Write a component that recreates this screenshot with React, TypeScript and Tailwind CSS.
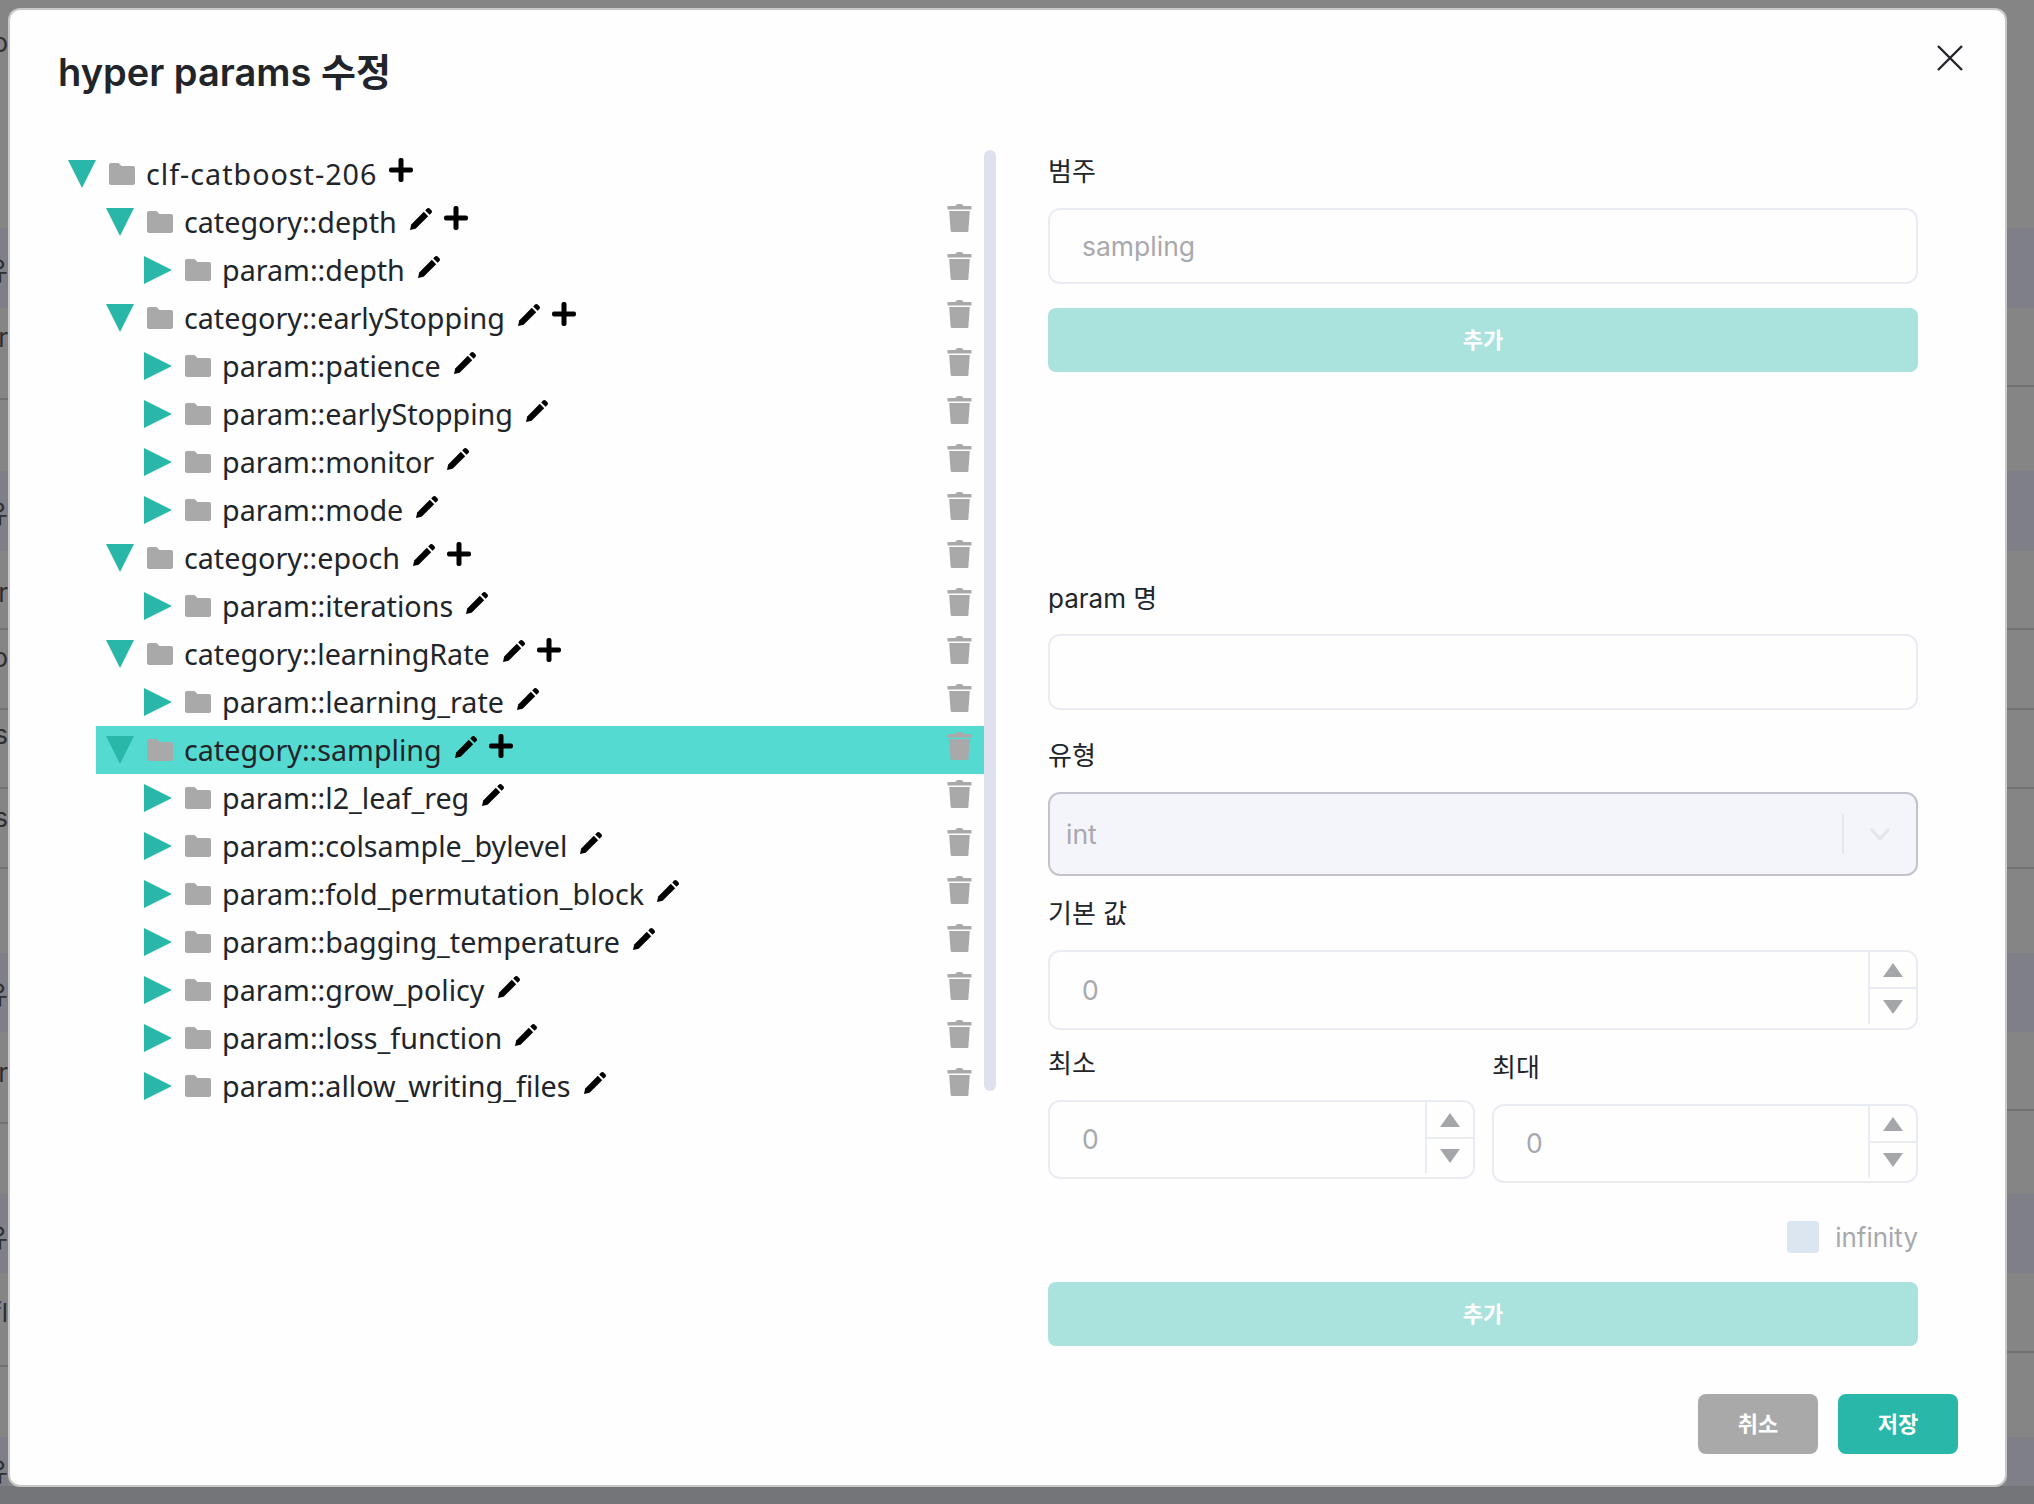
const rows: { depth: number; label: string; kind: "root" | "category" | "param"; selected?: boolean }[] = [
  { depth: 0, label: "clf-catboost-206", kind: "root" },
  { depth: 1, label: "category::depth", kind: "category" },
  { depth: 2, label: "param::depth", kind: "param" },
  { depth: 1, label: "category::earlyStopping", kind: "category" },
  { depth: 2, label: "param::patience", kind: "param" },
  { depth: 2, label: "param::earlyStopping", kind: "param" },
  { depth: 2, label: "param::monitor", kind: "param" },
  { depth: 2, label: "param::mode", kind: "param" },
  { depth: 1, label: "category::epoch", kind: "category" },
  { depth: 2, label: "param::iterations", kind: "param" },
  { depth: 1, label: "category::learningRate", kind: "category" },
  { depth: 2, label: "param::learning_rate", kind: "param" },
  { depth: 1, label: "category::sampling", kind: "category", selected: true },
  { depth: 2, label: "param::l2_leaf_reg", kind: "param" },
  { depth: 2, label: "param::colsample_bylevel", kind: "param" },
  { depth: 2, label: "param::fold_permutation_block", kind: "param" },
  { depth: 2, label: "param::bagging_temperature", kind: "param" },
  { depth: 2, label: "param::grow_policy", kind: "param" },
  { depth: 2, label: "param::loss_function", kind: "param" },
  { depth: 2, label: "param::allow_writing_files", kind: "param" },
]

const indent = ["pl-0", "pl-[38px]", "pl-[76px]"]

// what is left of the page behind the modal, top to bottom
type Strip = { h: number; band?: boolean; line?: boolean; text?: string; pt?: number }

const leftStrip: Strip[] = [
  { h: 228, text: "o", pt: 26 },
  { h: 80, band: true, text: "유", pt: 26 },
  { h: 92, line: true, text: "r", pt: 13 },
  { h: 71 },
  { h: 80, band: true, text: "유", pt: 26 },
  { h: 79, line: true, text: "r", pt: 25 },
  { h: 80, line: true, text: "o", pt: 11 },
  { h: 79, line: true, text: "s", pt: 8 },
  { h: 80, line: true, text: "s", pt: 12 },
  { h: 84 },
  { h: 79, band: true, text: "유", pt: 25 },
  { h: 92, line: true, text: "r", pt: 24 },
  { h: 70 },
  { h: 80, band: true, text: "유", pt: 27 },
  { h: 93, line: true, text: "fl", pt: 22 },
  { h: 70 },
  { h: 67, band: true, text: "유", pt: 18 },
]

const rightStrip: Strip[] = [
  { h: 228 },
  { h: 80, band: true },
  { h: 79, line: true },
  { h: 83 },
  { h: 81, band: true },
  { h: 79, line: true },
  { h: 80, line: true },
  { h: 79, line: true },
  { h: 80, line: true },
  { h: 84 },
  { h: 79, band: true },
  { h: 79, line: true },
  { h: 83 },
  { h: 80, band: true },
  { h: 79, line: true },
  { h: 84 },
  { h: 67, band: true },
]

function BackdropStrip({ items, className }: { items: Strip[]; className: string }) {
  return (
    <div className={`flex flex-col overflow-hidden ${className}`}>
      {items.map((s, i) => (
        <div
          key={i}
          style={{ height: s.h, paddingTop: s.pt ?? 0 }}
          className={`flex shrink-0 items-start justify-end whitespace-nowrap text-[26px] leading-[34px] text-[#2f2f2f] ${
            s.band ? "bg-[#7f8087]" : "bg-[#858585]"
          } ${s.line ? "border-b-2 border-[#717171]" : ""}`}
        >
          {s.text}
        </div>
      ))}
    </div>
  )
}

function Backdrop() {
  return (
    <div className="absolute inset-0 flex justify-between bg-[#858585]">
      <BackdropStrip items={leftStrip} className="w-2" />
      <BackdropStrip items={rightStrip} className="w-[27px]" />
      <div className="absolute bottom-0 left-0 right-0 h-[18px] bg-[#747579]" />
    </div>
  )
}

function Caret({ open }: { open: boolean }) {
  return (
    <svg width="28" height="28" viewBox="0 0 28 28" className="shrink-0 fill-[#29b7a9]">
      {open ? <path d="M0 0H28L14 28Z" /> : <path d="M0 0L28 14L0 28Z" />}
    </svg>
  )
}

function Folder() {
  return (
    <svg width="26" height="22" viewBox="0 0 26 22" className="ml-[13px] shrink-0 fill-[#a9a9a9]">
      <path d="M2 0H9.5L12.5 3H24C25.1 3 26 3.9 26 5V20C26 21.1 25.1 22 24 22H2C.9 22 0 21.1 0 20V2C0 .9.9 0 2 0Z" />
    </svg>
  )
}

function Pencil() {
  return (
    <svg width="22" height="22" viewBox="0 0 22 22" className="ml-[13px] shrink-0 -translate-y-[3px] fill-black">
      <path d="M0 22L1.2 16.4L13.8 3.8L18.2 8.2L5.6 20.8Z" />
      <path d="M15.2 2.4L17 .6C17.8-.2 18.9-.2 19.7.6L21.4 2.3C22.2 3.1 22.2 4.2 21.4 5L19.6 6.8Z" />
    </svg>
  )
}

function Plus() {
  return (
    <svg width="24" height="24" viewBox="0 0 24 24" className="ml-3 shrink-0 -translate-y-[4px] fill-black">
      <rect x="9.5" y="0" width="5" height="24" rx="2" />
      <rect x="0" y="9.5" width="24" height="5" rx="2" />
    </svg>
  )
}

function Trash() {
  return (
    <svg width="25" height="28" viewBox="0 0 25 28" className="shrink-0 -translate-y-1 fill-[#a9a9a9]">
      <path d="M8.5 2C9 .8 10 0 11 0H14C15 0 16 .8 16.5 2H24.5V5.5H.5V2Z" />
      <path d="M2.2 7H22.8L21.4 26.4C21.3 27.3 20.6 28 19.7 28H5.3C4.4 28 3.7 27.3 3.6 26.4Z" />
    </svg>
  )
}

function TreeRow({ row }: { row: (typeof rows)[number] }) {
  return (
    <div className={`flex h-12 shrink-0 items-center pr-3 ${row.selected ? "ml-[28px] bg-[#54dad0]" : ""}`}>
      <div className={`flex min-w-0 flex-1 items-center ${row.selected ? "pl-[10px]" : indent[row.depth]}`}>
        <Caret open={row.kind !== "param"} />
        <Folder />
        <span
          className={`ml-[11px] whitespace-nowrap font-['Noto_Sans',sans-serif] text-[28.7px] leading-[48px] text-[#212529] ${
            row.kind === "root" ? "tracking-[1px]" : ""
          }`}
        >
          {row.label}
        </span>
        {row.kind !== "root" && <Pencil />}
        {row.kind !== "param" && <Plus />}
      </div>
      {row.kind !== "root" && <Trash />}
    </div>
  )
}

function Label({ children, className = "" }: { children: React.ReactNode; className?: string }) {
  return <div className={`h-[30px] text-[26px] leading-[30px] text-[#212529] ${className}`}>{children}</div>
}

function Stepper() {
  return (
    <div className="flex w-[48px] shrink-0 flex-col self-stretch">
      <div className="flex h-[37px] items-center justify-center border-b-2 border-l-2 border-[#e9ecf3]">
        <svg width="20" height="14" viewBox="0 0 20 14" className="fill-[#a5a6aa]">
          <path d="M10 0L20 14H0Z" />
        </svg>
      </div>
      <div className="mb-1 flex flex-1 items-center justify-center border-l-2 border-[#e9ecf3]">
        <svg width="20" height="14" viewBox="0 0 20 14" className="fill-[#a5a6aa]">
          <path d="M0 0H20L10 14Z" />
        </svg>
      </div>
    </div>
  )
}

function NumberField({ className = "" }: { className?: string }) {
  return (
    <div className={`flex items-center rounded-xl border-2 border-[#e9ecf3] bg-[#fefefe] ${className}`}>
      <span className="flex-1 pl-[32px] pt-px text-[26.5px] text-[#a8a8ad]">0</span>
      <Stepper />
    </div>
  )
}

function AddButton({ className = "" }: { className?: string }) {
  return (
    <div className={`flex h-16 items-center justify-center rounded-lg bg-[#aae3de] text-[22px] font-bold text-white ${className}`}>
      추가
    </div>
  )
}

export default function App() {
  return (
    <div className="relative h-[1504px] w-[2034px] overflow-hidden font-['Inter','Noto_Sans_CJK_KR',sans-serif]">
      <Backdrop />
      <div className="relative ml-2 mt-2 flex h-[1479px] w-[1999px] flex-col rounded-xl border-2 border-[#c8c8c8] bg-[#fefefe]">
        <div className="flex h-[140px] shrink-0 items-start justify-between pl-[48px] pr-[42px] pt-[37px]">
          <h1 className="text-[38px] font-semibold leading-[50px] text-[#212529]">hyper params 수정</h1>
          <svg width="26" height="26" viewBox="0 0 26 26" className="mt-[-2px] stroke-[#212529] stroke-[2.4]">
            <path d="M1 1L25 25M25 1L1 25" />
          </svg>
        </div>
        <div className="flex flex-1">
          <div className="ml-[58px] flex h-[953px] w-[916px] shrink-0 flex-col overflow-hidden">
            {rows.map((row) => (
              <TreeRow key={row.label} row={row} />
            ))}
          </div>
          <div className="h-[941px] w-3 shrink-0 rounded-b-md rounded-t-md bg-[#dfe1ee]" />
          <div className="ml-[52px] flex w-[870px] shrink-0 flex-col">
            <Label className="mt-[7px]">범주</Label>
            <div className="mt-[21px] flex h-[76px] items-center rounded-xl border-2 border-[#e9ecf3] pl-[32px] pt-px text-[26.5px] text-[#a8a8ad]">
              sampling
            </div>
            <AddButton className="mt-6" />
            <Label className="mt-[212px]">param 명</Label>
            <div className="mt-[20px] h-[76px] rounded-xl border-2 border-[#e9ecf3]" />
            <Label className="mt-[31px]">유형</Label>
            <div className="mt-[21px] flex h-[84px] items-center rounded-xl border-2 border-[#c2c3cc] bg-[#f4f5fb] pl-[16px] text-[26.5px] text-[#a8a8ad]">
              <span className="flex-1 pt-px">int</span>
              <div className="h-10 w-[2px] bg-[#e6e7ee]" />
              <svg width="22" height="14" viewBox="0 0 22 14" className="mx-[25px] fill-none stroke-[#e3e4ec] stroke-[3]">
                <path d="M2 2L11 12L20 2" />
              </svg>
            </div>
            <Label className="mt-[23px]">기본 값</Label>
            <NumberField className="mt-[21px] h-[80px]" />
            <div className="mt-[19px] flex gap-[17px]">
              <div className="flex w-[427px] flex-col">
                <Label>최소</Label>
                <NumberField className="mt-[21px] h-[79px]" />
              </div>
              <div className="mt-1 flex w-[426px] flex-col">
                <Label>최대</Label>
                <NumberField className="mt-[21px] h-[79px]" />
              </div>
            </div>
            <div className="mt-[38px] flex h-8 items-center justify-end text-[26px] text-[#a8a8ad]">
              <div className="mr-4 h-8 w-8 rounded bg-[#dce6f0]" />
              <span className="pt-px">infinity</span>
            </div>
            <AddButton className="mt-[29px]" />
          </div>
        </div>
        <div className="mb-[31px] ml-auto mr-[47px] flex gap-5">
          <div className="flex h-[60px] w-[120px] items-center justify-center rounded-lg bg-[#a9a9a9] text-[22px] font-bold text-white">
            취소
          </div>
          <div className="flex h-[60px] w-[120px] items-center justify-center rounded-lg bg-[#28b7a9] text-[22px] font-bold text-white">
            저장
          </div>
        </div>
      </div>
    </div>
  )
}
